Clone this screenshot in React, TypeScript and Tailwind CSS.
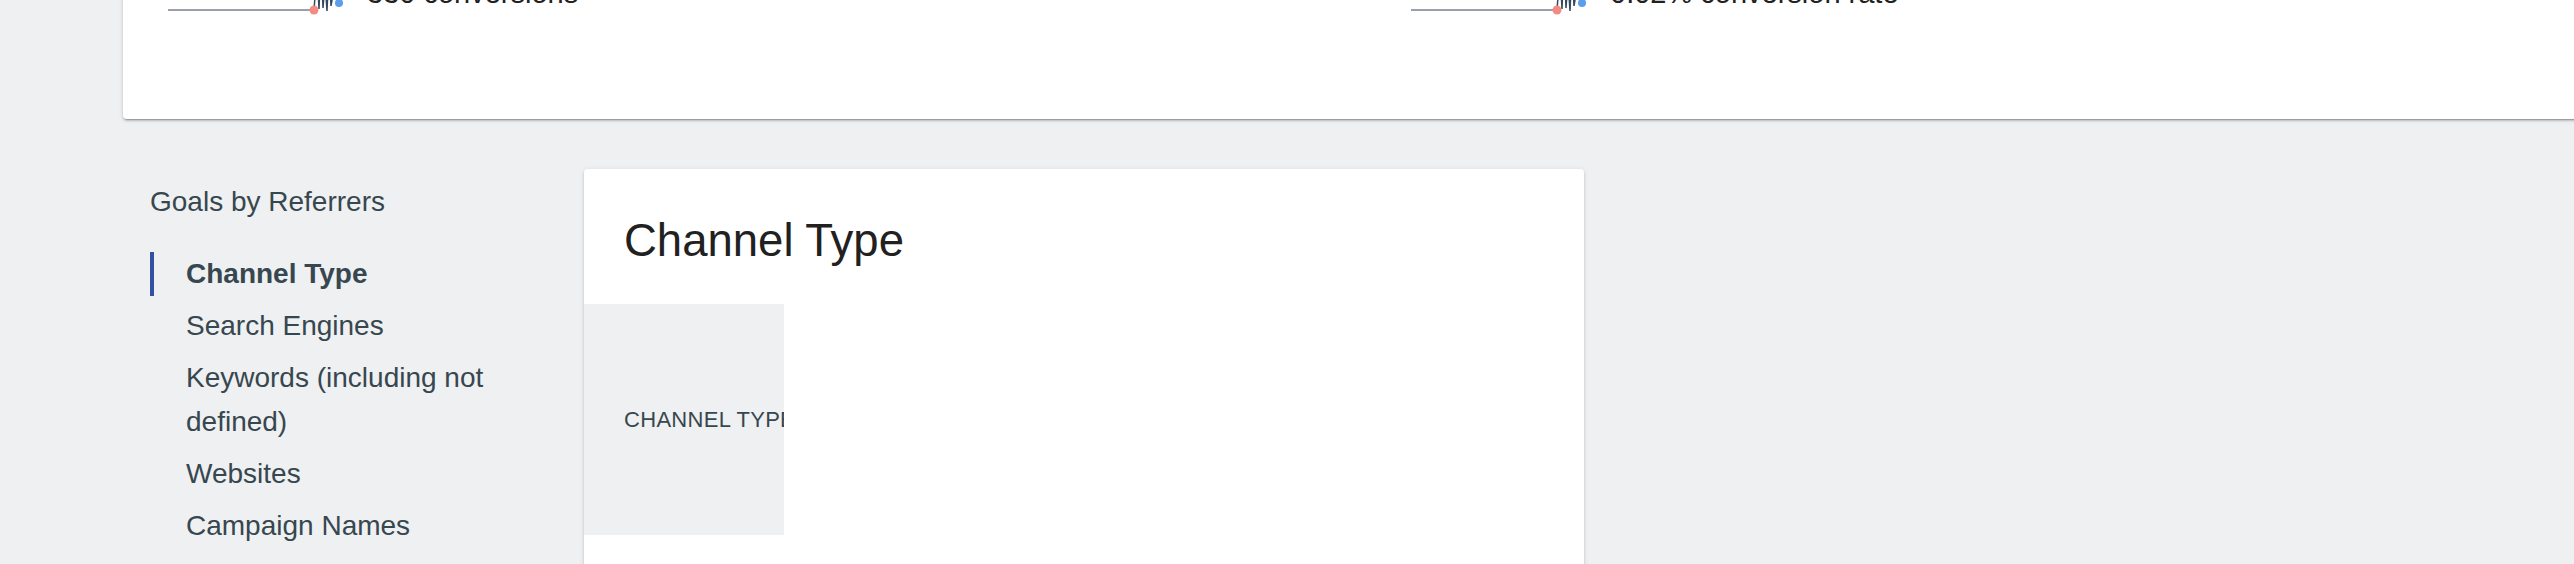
import React from 'react';

const FONT = { fontFamily: '"Liberation Sans", Arial, sans-serif' };

const SUBCATEGORIES = [
  'Channel Type',
  'Search Engines',
  'Keywords (including not defined)',
  'Websites',
  'Campaign Names',
];

const SPARKS = [
  { label: '330 conversions', width: 'w-[1243px]' },
  { label: '0.02% conversion rate', width: 'w-[1243px]' },
];

const Sparkline: React.FC = () => (
  <svg width="180" height="80" viewBox="0 0 180 80" className="flex-shrink-0">
    <line x1="0" y1="70" x2="146" y2="70" stroke="#9aa1ad" strokeWidth="2" />
    <polyline
      points="146,70 149,30 151,69 153,18 155,68 157,40 159,71 161,26 163,66 166,48 171,63"
      fill="none"
      stroke="#34495e"
      strokeWidth="1.5"
    />
    <circle cx="146" cy="70" r="4.5" fill="#f28b82" />
    <circle cx="171" cy="63" r="4" fill="#5c9ded" />
  </svg>
);

const App: React.FC = () => {
  const active = 0;

  return (
    <div className="h-[564px] w-full overflow-hidden bg-[#eff0f1]" style={FONT}>
      {/* Sparkline card, scrolled mostly out of view */}
      <div className="-mt-[60px] ml-[123px] h-[179px] w-[2500px] rounded-b-[4px] bg-white shadow-[0_2px_2px_0_rgba(0,0,0,0.14),0_1px_5px_0_rgba(0,0,0,0.12),0_3px_1px_-2px_rgba(0,0,0,0.2)]">
        <div className="flex pl-[45px]">
          {SPARKS.map((s) => (
            <div key={s.label} className={`flex flex-shrink-0 items-start ${s.width}`}>
              <Sparkline />
              <span className="ml-[19px] mt-[35px] whitespace-nowrap text-[29px] leading-[36px] text-[#212121]">
                {s.label}
              </span>
            </div>
          ))}
        </div>
      </div>

      <div className="mt-[50px] flex pl-[150px]">
        {/* Subcategory menu */}
        <div className="w-[434px] flex-shrink-0 pr-[40px]">
          <h3 className="mt-[11px] text-[28px] leading-[44px] text-[#37474f]">Goals by Referrers</h3>
          <ul className="mt-[28px] flex flex-col gap-[8px]">
            {SUBCATEGORIES.map((name, index) => (
              <li
                key={name}
                className={`border-l-4 pl-[32px] text-[28px] leading-[44px] text-[#37474f] ${
                  index === active ? 'border-[#3450a3] font-bold' : 'border-transparent'
                }`}
              >
                {name}
              </li>
            ))}
          </ul>
        </div>

        {/* Report card */}
        <div className="h-[420px] w-[1000px] flex-shrink-0 rounded-[4px] bg-white shadow-[0_2px_2px_0_rgba(0,0,0,0.14),0_1px_5px_0_rgba(0,0,0,0.12),0_3px_1px_-2px_rgba(0,0,0,0.2)]">
          <h2 className="pb-[36px] pl-[40px] pt-[45px] text-[45.5px] leading-[54px] text-[#212121]">Channel Type</h2>
          <div className="flex h-[231px] w-[200px] items-center overflow-hidden bg-[#eff0f1] pl-[40px]">
            <span className="whitespace-nowrap text-[22px] uppercase tracking-[0.3px] text-[#37474f]">Channel Type</span>
          </div>
        </div>
      </div>
    </div>
  );
};

export default App;
